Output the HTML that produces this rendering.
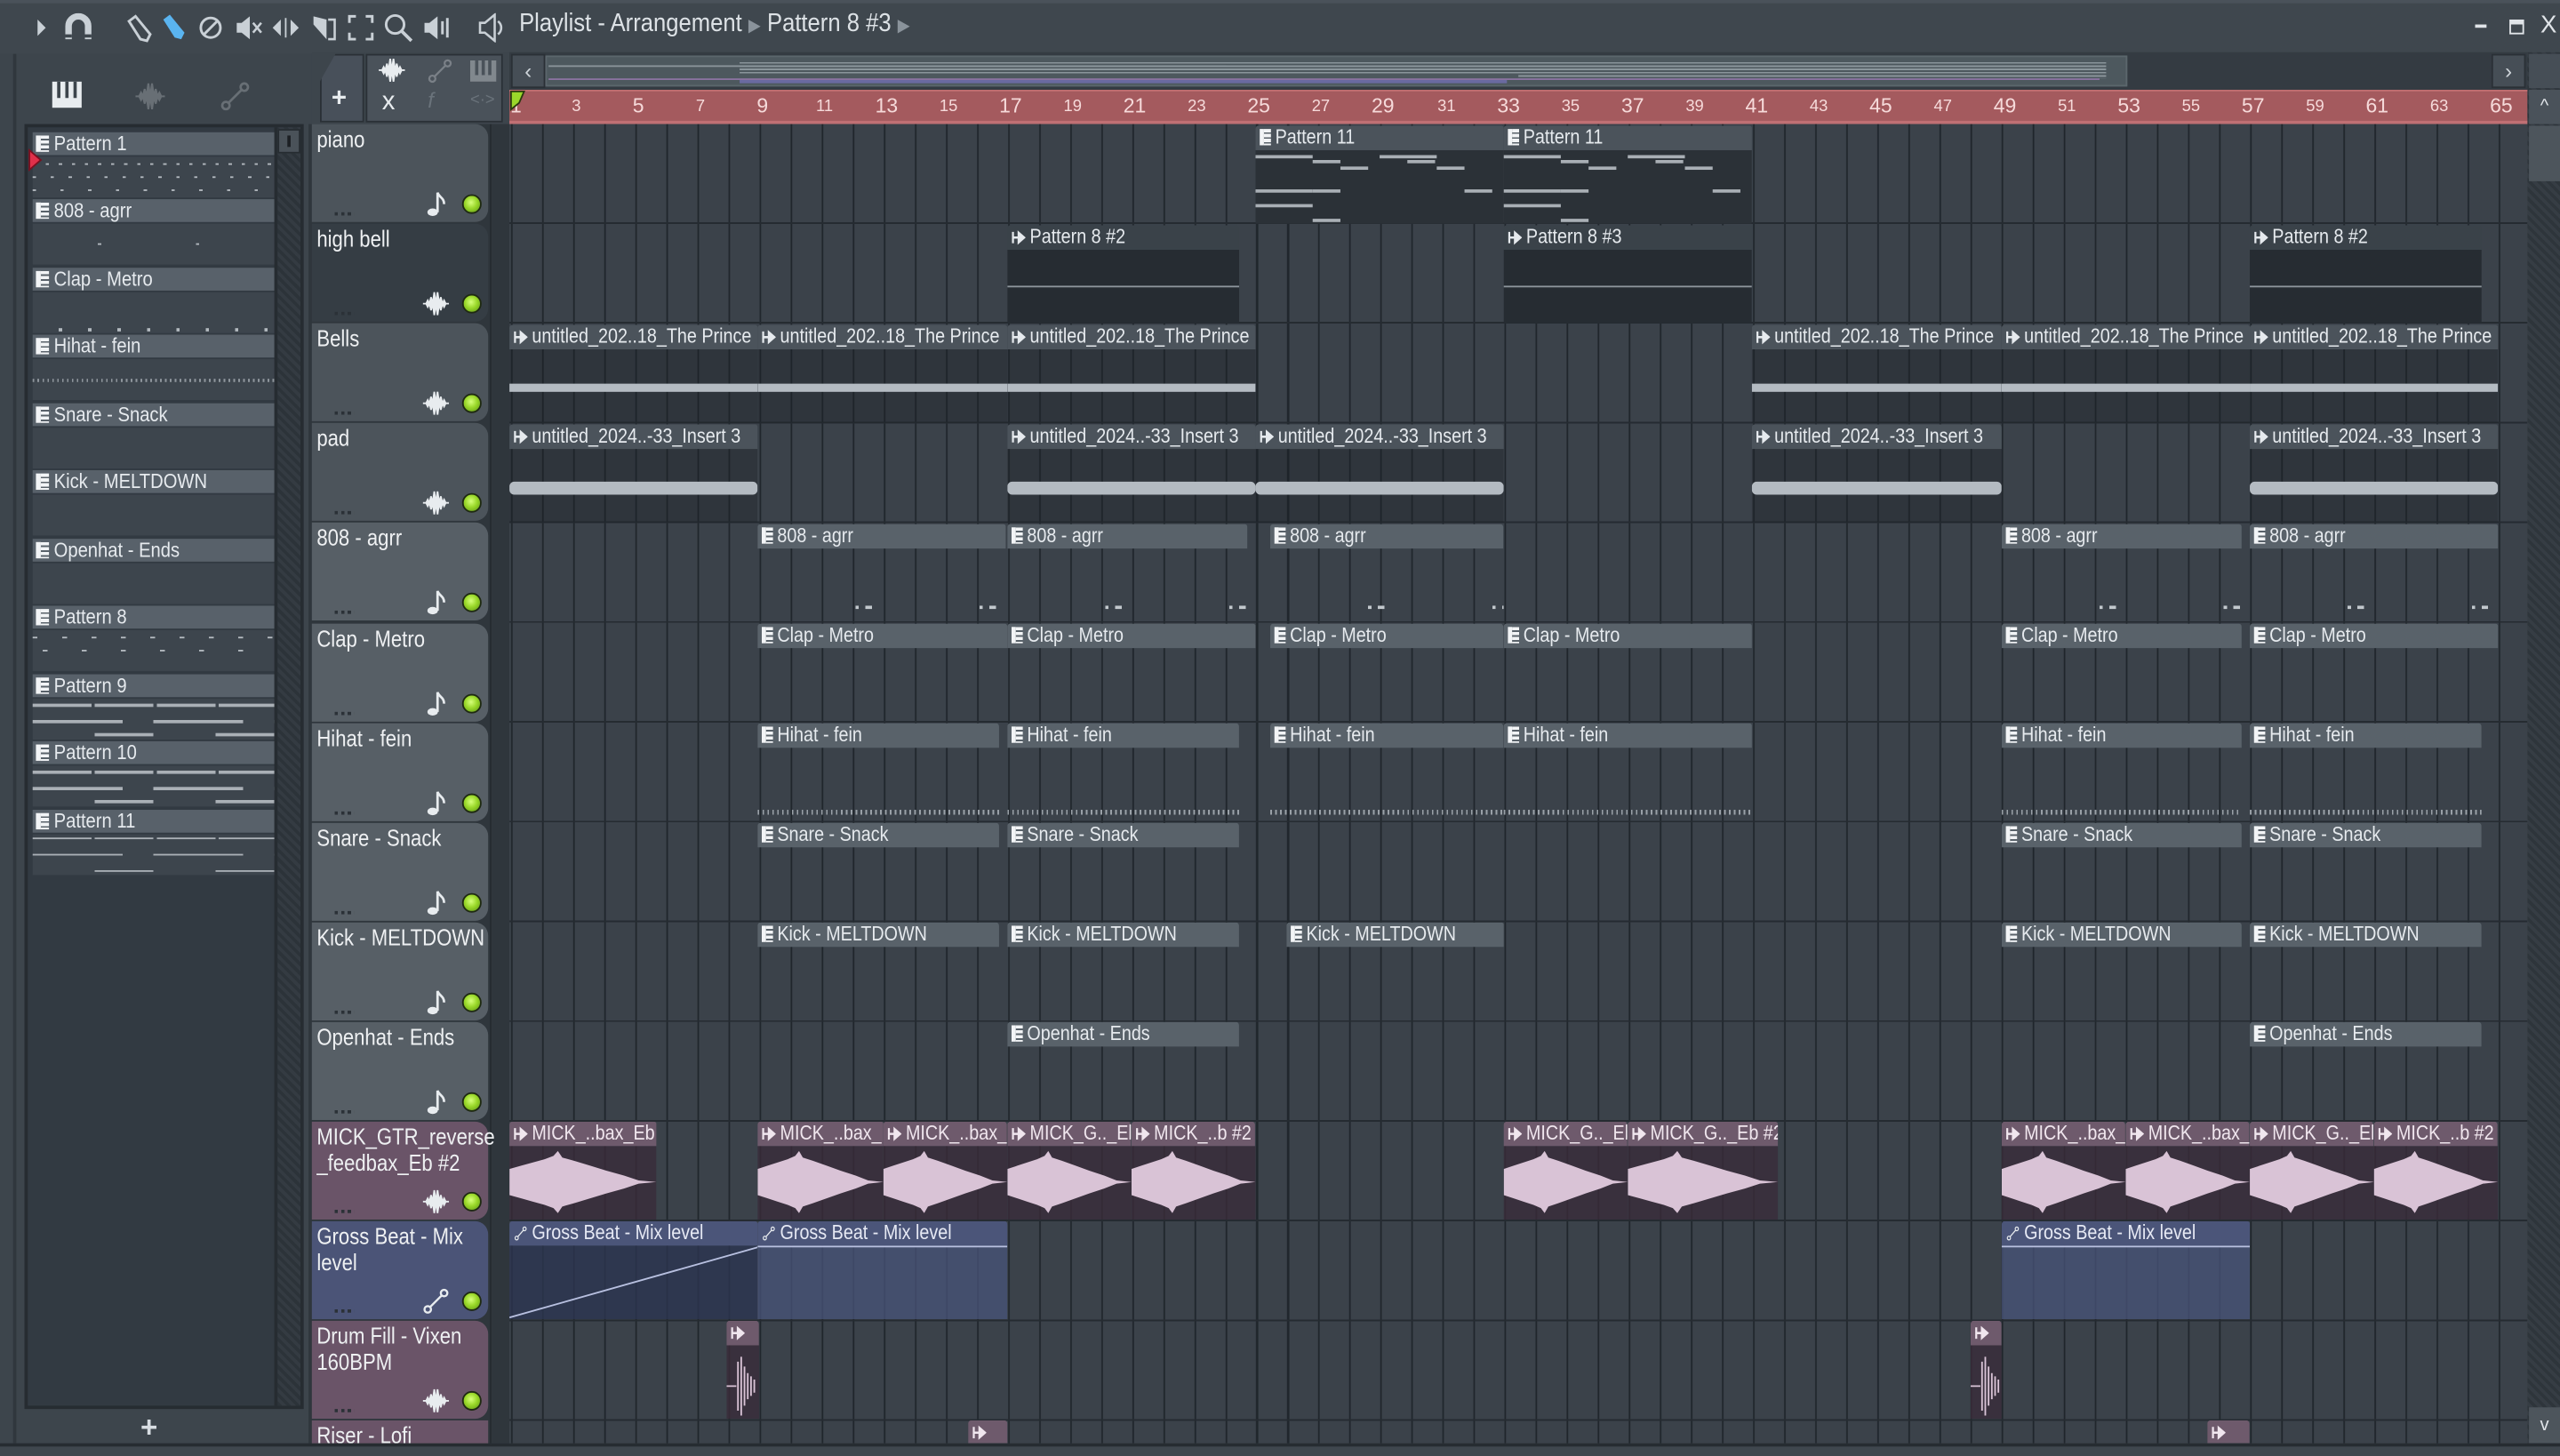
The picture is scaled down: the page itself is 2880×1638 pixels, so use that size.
<!DOCTYPE html>
<html><head><meta charset="utf-8">
<style>
*{margin:0;padding:0;box-sizing:border-box}
html,body{width:2880px;height:1638px;overflow:hidden;background:#3d454c}
#w{position:absolute;left:0;top:0;width:1568px;height:892px;transform:scale(1.836735);transform-origin:0 0;background:#3d454c;font-family:"Liberation Sans",sans-serif;color:#e4e8ec;overflow:hidden}
.a{position:absolute}
.tb{left:0;top:0;width:1568px;height:33px;background:#3f474e;border-top:2px solid #4a525a}
.title{left:318px;top:6px;font-size:15.5px;color:#dde2e6;transform:scaleX(.9);transform-origin:0 0;white-space:nowrap}
#grid{left:312px;top:76px;width:1236px;height:808px;background-color:#3b424a;
background-image:repeating-linear-gradient(180deg,transparent 0 60.1px,#252b31 60.1px 61.1px),repeating-linear-gradient(90deg,#20262c 0 1px,transparent 1px 19.02px);background-position:0 0,1px 0}
.ruler{left:312px;top:55px;width:1236px;height:21px;background:#a45a5e;border-top:1px solid #c06f72;border-bottom:2px solid #c07074}
.rn{position:absolute;top:4px;width:20px;margin-left:-10px;text-align:center;color:#f6dada;font-size:10px}
.rn.b{font-size:12.5px;top:2px}
.th{position:absolute;left:191px;width:108px;height:60px;background:#4c545b;border-radius:0 8px 8px 0;font-size:14px;padding:1px 3px;line-height:16px;color:#eef0f2}
.th .nm{display:inline-block;transform:scaleX(.86);transform-origin:0 0;white-space:nowrap}
.th .dots{position:absolute;left:14px;bottom:4px;width:12px;height:2px;background:repeating-linear-gradient(90deg,#2b3137 0 2px,transparent 2px 4px)}
.th .led{position:absolute;left:92px;top:43px;width:12px;height:12px;border-radius:50%;background:radial-gradient(circle at 45% 40%,#d6ff7a 0,#9ad82a 45%,#5c9412 100%);border:1.5px solid #1f2a12}
.th svg{position:absolute;left:68px;top:41px;width:16px;height:16px}
.c{position:absolute;height:60px;overflow:hidden}
.h{height:15px;width:116.3%;transform:scaleX(.86);transform-origin:0 0;font-size:12.5px;line-height:15px;padding-left:2px;white-space:nowrap;overflow:hidden;border-radius:2px 2px 0 0;color:#e6eaee}
.p .h{background:#59626a}
.au .h{background:#4b535b}
.au .bd{position:absolute;left:0;top:15px;right:0;bottom:0;background:rgba(28,34,40,.38)}
.pi{display:inline-block;width:8px;height:10px;margin:0 3px -1px 1px;background:repeating-linear-gradient(180deg,#f2f4f6 0 2px,#59626a 2px 3px);border-left:3px solid #f2f4f6}
.ai{display:inline-block;width:10px;height:9px;margin:0 3px -1px 1px}
.wv{position:absolute;left:0;right:0;background:#b4bbc2}
.mk .h{background:#6e5a6c;color:#f0e6ee}
.mk .bd{position:absolute;left:0;top:15px;right:0;bottom:0;background:rgba(58,44,58,.8)}
.mk svg.w{position:absolute;left:0;top:17px;width:100%;height:40px}
.gb .h{background:#4b5579;color:#e6e9f4}
.gb .bd{position:absolute;left:0;top:15px;right:0;bottom:0;background:rgba(72,84,122,.75)}
.dk .h{background:#3a4249}
.dk .bd{position:absolute;left:0;top:15px;right:0;bottom:0;background:#262c32}
.pn .h{background:#4b535b}
.pn .bd{position:absolute;left:0;top:15px;right:0;bottom:0;background:#2b3137;
background-image:linear-gradient(#a9afb5,#a9afb5),linear-gradient(#a9afb5,#a9afb5),linear-gradient(#a9afb5,#a9afb5),linear-gradient(#a9afb5,#a9afb5),linear-gradient(#a9afb5,#a9afb5),linear-gradient(#a9afb5,#a9afb5),linear-gradient(#a9afb5,#a9afb5),linear-gradient(#a9afb5,#a9afb5),linear-gradient(#a9afb5,#a9afb5),linear-gradient(#a9afb5,#a9afb5),linear-gradient(#a9afb5,#a9afb5),linear-gradient(#a9afb5,#a9afb5);
background-size:35px 2px,17px 2px,17px 2px,35px 2px,17px 2px,35px 2px,17px 2px,17px 2px,17px 2px,35px 2px,17px 2px,17px 2px;
background-repeat:no-repeat;
background-position:0 3px,35px 6px,52px 10px,0 24px,35px 24px,0 33px,35px 42px,52px 45px,111px 10px,76px 3px,93px 6px,128px 24px}
.n808{background-image:repeating-linear-gradient(90deg,#c2c8cd 0 2px,transparent 2px 16px),repeating-linear-gradient(90deg,transparent 0 60px,#c2c8cd 60px 62px,transparent 62px 66px,#c2c8cd 66px 70px,transparent 70px 76px);background-repeat:repeat-x;background-size:100% 2px,100% 2px;background-position:0 46px,0 35px}
.nclap{background-image:repeating-linear-gradient(90deg,transparent 0 17px,#c2c8cd 17px 19px);background-repeat:repeat-x;background-size:100% 3px;background-position:0 55px}
.nhh{background-image:repeating-linear-gradient(90deg,#9aa1a8 0 1px,transparent 1px 3px);background-repeat:repeat-x;background-size:100% 3px;background-position:0 38px}
.pl{position:absolute;left:0;right:0;top:15px;bottom:0}
.lp{left:15px;top:76px;width:171px;height:787px;background:#323a42;border:2px solid #262c31}
.li{position:absolute;left:3px;width:148px}
.li .lh{height:14px;background:#58616a;font-size:12.5px;line-height:14px;padding-left:1px;color:#e6eaee;white-space:nowrap;overflow:hidden}
.li .lh span{display:inline-block;transform:scaleX(.88);transform-origin:0 0}
.li .lb{height:25px;background:#3d454d;margin-top:1px}
</style></head><body>
<svg width="0" height="0" style="position:absolute">
<defs>
<symbol id="au" viewBox="0 0 10 9"><path d="M1 1v7M1 4.5h8M5 1.5l4 3-4 3z" stroke="currentColor" stroke-width="1.4" fill="currentColor"/></symbol>
<symbol id="wave" viewBox="0 0 16 16"><path d="M0 8h2l1-2 1 2 1-4 1 4 1-7 1 7 1-7 1 7 1-4 1 4 1-2 1 2h2M0 8h2l1 2 1-2 1 4 1-4 1 7 1-7 1 7 1-7 1 4 1-4 1 2 1-2" fill="#e8ecef" stroke="#e8ecef" stroke-width="1"/></symbol>
<symbol id="note" viewBox="0 0 16 16"><ellipse cx="6" cy="13" rx="3.2" ry="2.3" fill="#e8ecef"/><path d="M9 13V1c1 3 4 3 4 7" stroke="#e8ecef" stroke-width="1.5" fill="none"/></symbol>
<symbol id="auto" viewBox="0 0 16 16"><circle cx="3" cy="13" r="2" fill="none" stroke="#e8ecef" stroke-width="1.3"/><circle cx="13" cy="3" r="2" fill="none" stroke="#e8ecef" stroke-width="1.3"/><path d="M4.5 11.5l7-7" stroke="#e8ecef" stroke-width="1.3"/></symbol>
<symbol id="mw" viewBox="0 0 100 40" preserveAspectRatio="none"><path d="M0 12 L8 10 L16 8 L24 6 L30 4 L33 1 L36 5 L44 7 L55 10 L66 13 L78 16 L88 19 L100 20 L88 21 L78 24 L66 27 L55 30 L44 33 L36 35 L33 39 L30 36 L24 34 L16 32 L8 30 L0 28Z" fill="#d9c3d6"/></symbol>
</defs></svg>
<div id="w">
<div class="a tb"></div>
<div class="a" style="left:8px;top:33px;width:2px;height:859px;background:#30373d"></div>
<svg class="a" style="left:22px;top:11px" width="8" height="12"><path d="M1 1l5 5-5 5z" fill="#c9d0d6"/></svg>
<svg class="a" style="left:39px;top:8px" width="18" height="18"><path d="M3 16V8a6 6 0 0 1 12 0v8" stroke="#c9d0d6" stroke-width="4" fill="none"/><path d="M1 14h4M13 14h4" stroke="#3f474e" stroke-width="2"/></svg>
<svg class="a" style="left:76px;top:8px" width="18" height="18"><path d="M3 5l4-3 9 11-2 4-4-1z" stroke="#c9d0d6" stroke-width="1.6" fill="none"/></svg>
<svg class="a" style="left:98px;top:8px" width="18" height="18"><path d="M2 4l4-3 9 11-2 4-4-1z" fill="#5ab4f0"/></svg>
<svg class="a" style="left:121px;top:9px" width="16" height="16"><circle cx="8" cy="8" r="6" stroke="#c9d0d6" stroke-width="1.6" fill="none"/><path d="M4 12l8-8" stroke="#c9d0d6" stroke-width="1.6"/></svg>
<svg class="a" style="left:144px;top:9px" width="18" height="16"><path d="M1 5h3l5-4v14l-5-4H1z" fill="#c9d0d6"/><path d="M11 5l5 6M16 5l-5 6" stroke="#c9d0d6" stroke-width="1.4"/></svg>
<svg class="a" style="left:166px;top:9px" width="18" height="16"><path d="M1 8l5-5v10zM17 8l-5-5v10z" fill="#c9d0d6"/><path d="M9 2v12" stroke="#c9d0d6"/></svg>
<svg class="a" style="left:190px;top:8px" width="18" height="18"><path d="M2 2l8 2v12l-8-9z" fill="#c9d0d6"/><path d="M11 4h4v12h-4" stroke="#c9d0d6" stroke-width="1.4" fill="none"/></svg>
<svg class="a" style="left:213px;top:9px" width="16" height="16"><path d="M1 5V1h4M11 1h4v4M15 11v4h-4M5 15H1v-4" stroke="#c9d0d6" stroke-width="1.6" fill="none"/></svg>
<svg class="a" style="left:235px;top:8px" width="18" height="18"><circle cx="7" cy="7" r="5.5" stroke="#c9d0d6" stroke-width="1.6" fill="none"/><path d="M11 11l6 6" stroke="#c9d0d6" stroke-width="2"/></svg>
<svg class="a" style="left:259px;top:9px" width="18" height="16"><path d="M1 5h3l5-4v14l-5-4H1z" fill="#c9d0d6"/><path d="M12 4v8M15 2v12" stroke="#c9d0d6" stroke-width="1.6"/></svg>
<svg class="a" style="left:293px;top:8px" width="18" height="18"><path d="M1 6h3l6-5v16l-6-5H1z" stroke="#c9d0d6" stroke-width="1.4" fill="none"/><path d="M12 5a5 5 0 0 1 0 8" stroke="#c9d0d6" stroke-width="1.4" fill="none"/></svg>
<div class="a title">Playlist - Arrangement <span style="color:#8a939b;font-size:11px">▶</span> Pattern 8 #3 <span style="color:#8a939b;font-size:11px">▶</span></div>
<div class="a" style="left:1516px;top:15px;width:7px;height:2px;background:#e0e4e8"></div>
<div class="a" style="left:1537px;top:12px;width:9px;height:9px;border:1.5px solid #e0e4e8;border-top-width:3px"></div>
<div class="a" style="left:1556px;top:7px;font-size:15px;color:#e0e4e8">X</div>

<svg class="a" style="left:31px;top:49px" width="20" height="18"><rect x="1" y="1" width="18" height="16" fill="#e8ecef"/><path d="M5 1v10M10 1v10M15 1v10" stroke="#3d454c" stroke-width="2"/></svg>
<svg class="a" style="left:82px;top:50px;opacity:.25" width="20" height="18"><use href="#wave"/></svg>
<svg class="a" style="left:135px;top:50px;opacity:.25" width="18" height="18"><use href="#auto"/></svg>

<div class="a lp">
 <div class="a" style="left:151px;top:0;width:16px;height:783px;background:repeating-linear-gradient(45deg,#2c3339 0 2px,#343b42 2px 4px);border-left:2px solid #262c31"></div>
 <div class="a" style="left:153px;top:1px;width:14px;height:15px;background:#4a5259;border:1px solid #262c31"><div style="margin:3px auto;width:2px;height:7px;background:#1c2024"></div></div>
 <div class="li" style="top:3px"><div class="lh"><i class="pi"></i><span>Pattern 1</span></div><div class="lb" style="background-image:repeating-linear-gradient(90deg,#b4bac0 0 2px,transparent 2px 8px),repeating-linear-gradient(90deg,#b4bac0 0 2px,transparent 2px 11px),repeating-linear-gradient(90deg,#b4bac0 0 2px,transparent 2px 17px);background-repeat:repeat-x;background-size:100% 1px;background-position:0 4px,0 12px,0 20px"></div></div>
 <div class="li" style="top:44px"><div class="lh"><i class="pi"></i><span>808 - agrr</span></div><div class="lb" style="background-image:repeating-linear-gradient(90deg,transparent 0 40px,#b4bac0 40px 42px,transparent 42px 60px);background-repeat:repeat-x;background-size:100% 1px;background-position:0 12px"></div></div>
 <div class="li" style="top:86px"><div class="lh"><i class="pi"></i><span>Clap - Metro</span></div><div class="lb" style="background-image:repeating-linear-gradient(90deg,transparent 0 16px,#b4bac0 16px 18px);background-repeat:repeat-x;background-size:100% 2px;background-position:0 22px"></div></div>
 <div class="li" style="top:127px"><div class="lh"><i class="pi"></i><span>Hihat - fein</span></div><div class="lb" style="background-image:repeating-linear-gradient(90deg,#8e959c 0 1px,transparent 1px 3px);background-repeat:repeat-x;background-size:100% 2px;background-position:0 12px"></div></div>
 <div class="li" style="top:169px"><div class="lh"><i class="pi"></i><span>Snare - Snack</span></div><div class="lb"></div></div>
 <div class="li" style="top:210px"><div class="lh"><i class="pi"></i><span>Kick - MELTDOWN</span></div><div class="lb"></div></div>
 <div class="li" style="top:252px"><div class="lh"><i class="pi"></i><span>Openhat - Ends</span></div><div class="lb"></div></div>
 <div class="li" style="top:293px"><div class="lh"><i class="pi"></i><span>Pattern 8</span></div><div class="lb" style="background-image:repeating-linear-gradient(90deg,#b4bac0 0 3px,transparent 3px 18px),repeating-linear-gradient(90deg,transparent 0 6px,#b4bac0 6px 9px,transparent 9px 24px);background-repeat:repeat-x;background-size:100% 1px;background-position:0 4px,0 12px"></div></div>
 <div class="li" style="top:335px"><div class="lh"><i class="pi"></i><span>Pattern 9</span></div><div class="lb" style="background-image:repeating-linear-gradient(90deg,#aab0b6 0 36px,transparent 36px 38px),repeating-linear-gradient(90deg,#aab0b6 0 55px,transparent 55px 74px),repeating-linear-gradient(90deg,transparent 0 38px,#aab0b6 38px 74px);background-repeat:repeat-x;background-size:100% 2px;background-position:0 3px,0 13px,0 21px"></div></div>
 <div class="li" style="top:376px"><div class="lh"><i class="pi"></i><span>Pattern 10</span></div><div class="lb" style="background-image:repeating-linear-gradient(90deg,#aab0b6 0 36px,transparent 36px 38px),repeating-linear-gradient(90deg,#aab0b6 0 55px,transparent 55px 74px),repeating-linear-gradient(90deg,transparent 0 38px,#aab0b6 38px 74px);background-repeat:repeat-x;background-size:100% 2px;background-position:0 3px,0 13px,0 21px"></div></div>
 <div class="li" style="top:418px"><div class="lh"><i class="pi"></i><span>Pattern 11</span></div><div class="lb" style="background-image:repeating-linear-gradient(90deg,#aab0b6 0 36px,transparent 36px 38px),repeating-linear-gradient(90deg,#aab0b6 0 55px,transparent 55px 74px),repeating-linear-gradient(90deg,transparent 0 38px,#aab0b6 38px 74px);background-repeat:repeat-x;background-size:100% 1px;background-position:0 2px,0 12px,0 22px"></div></div>
</div>
<svg class="a" style="left:17px;top:91px" width="9" height="14"><path d="M1 1l7 6-7 6z" fill="#e0304a" stroke="#7a1020"/></svg>
<div class="a" style="left:86px;top:864px;font-size:18px;color:#d8dde2;font-weight:bold">+</div>

<div class="a" style="left:191px;top:32px;width:121px;height:44px;background:#3d454c"></div>
<div class="a" style="left:196px;top:33px;width:27px;height:42px;background:#48505a;border:1px solid #2a3036;border-radius:6px 0 0 0;clip-path:polygon(35% 0,100% 0,100% 100%,0 100%,0 40%)"></div>
<div class="a" style="left:203px;top:52px;font-size:16px;font-weight:bold;color:#e8ecef">+</div>
<div class="a" style="left:224px;top:33px;width:84px;height:42px;background:#4a525a;border:1px solid #2a3036"></div>
<svg class="a" style="left:230px;top:35px" width="20" height="16"><use href="#wave"/></svg>
<svg class="a" style="left:262px;top:36px;opacity:.3" width="15" height="15"><use href="#auto"/></svg>
<svg class="a" style="left:288px;top:37px;opacity:.35" width="16" height="13"><rect width="16" height="13" fill="#e8ecef"/><path d="M4 0v9M8 0v9M12 0v9" stroke="#4a525a" stroke-width="2"/></svg>
<div class="a" style="left:234px;top:54px;font-size:16px;color:#e8ecef">x</div>
<div class="a" style="left:262px;top:54px;font-size:13px;color:#6a737b;font-style:italic">f</div>
<div class="a" style="left:288px;top:56px;font-size:10px;color:#6a737b">&lt;·&gt;</div>

<div class="a" style="left:312px;top:32px;width:1236px;height:23px;background:#343b42"></div>
<div class="a" style="left:313px;top:33px;width:21px;height:21px;background:#464e56;border:1px solid #2a3036;color:#cfd5da;font-size:13px;text-align:center;line-height:19px">‹</div>
<div class="a" style="left:334px;top:34px;width:969px;height:19px;background:#4d585e;border:1px solid #5b666c"></div>
<div class="a" style="left:336px;top:40px;width:415px;height:1px;background:#8a959b"></div>
<div class="a" style="left:453px;top:38px;width:478px;height:8px;background:repeating-linear-gradient(180deg,#8a959b 0 1px,transparent 1px 2px)"></div>
<div class="a" style="left:930px;top:38px;width:360px;height:10px;background:repeating-linear-gradient(180deg,#8a959b 0 1px,transparent 1px 2px)"></div>
<div class="a" style="left:336px;top:48px;width:950px;height:1px;background:#8a72a0"></div>
<div class="a" style="left:453px;top:49px;width:470px;height:2px;background:#6a6aa0"></div>
<div class="a" style="left:1526px;top:33px;width:21px;height:21px;background:#464e56;border:1px solid #2a3036;color:#cfd5da;font-size:13px;text-align:center;line-height:19px">›</div>
<div class="a" style="left:1548px;top:32px;width:20px;height:860px;background:repeating-linear-gradient(45deg,#2e353b 0 2px,#363d44 2px 4px)"></div>
<div class="a" style="left:1549px;top:33px;width:19px;height:21px;background:#464e56"></div>
<div class="a" style="left:1549px;top:55px;width:19px;height:21px;background:#4a525a;color:#e0e4e8;font-size:11px;text-align:center;line-height:21px">^</div>
<div class="a" style="left:1549px;top:77px;width:19px;height:34px;background:#4d555c"></div>
<div class="a" style="left:1549px;top:862px;width:19px;height:22px;background:#4d555c;color:#e0e4e8;font-size:11px;text-align:center;line-height:22px">v</div>
<div class="a" style="left:0;top:884px;width:1568px;height:8px;background:#3f474e;border-top:2px solid #262c31"></div>

<div class="a ruler">
<span class="rn b" style="left:4px">1</span><span class="rn" style="left:41px">3</span><span class="rn b" style="left:79px">5</span><span class="rn" style="left:117px">7</span><span class="rn b" style="left:155px">9</span><span class="rn" style="left:193px">11</span><span class="rn b" style="left:231px">13</span><span class="rn" style="left:269px">15</span><span class="rn b" style="left:307px">17</span><span class="rn" style="left:345px">19</span><span class="rn b" style="left:383px">21</span><span class="rn" style="left:421px">23</span><span class="rn b" style="left:459px">25</span><span class="rn" style="left:497px">27</span><span class="rn b" style="left:535px">29</span><span class="rn" style="left:574px">31</span><span class="rn b" style="left:612px">33</span><span class="rn" style="left:650px">35</span><span class="rn b" style="left:688px">37</span><span class="rn" style="left:726px">39</span><span class="rn b" style="left:764px">41</span><span class="rn" style="left:802px">43</span><span class="rn b" style="left:840px">45</span><span class="rn" style="left:878px">47</span><span class="rn b" style="left:916px">49</span><span class="rn" style="left:954px">51</span><span class="rn b" style="left:992px">53</span><span class="rn" style="left:1030px">55</span><span class="rn b" style="left:1068px">57</span><span class="rn" style="left:1106px">59</span><span class="rn b" style="left:1144px">61</span><span class="rn" style="left:1182px">63</span><span class="rn b" style="left:1220px">65</span>
</div>
<svg class="a" style="left:312px;top:55px" width="10" height="14"><path d="M1 1h8l-3 7-5 4z" fill="#9ad82a" stroke="#2a3a10"/></svg>

<div class="a" style="left:189px;top:76px;width:123px;height:808px;background:#2f363c"></div>
<div class="a" style="left:300px;top:76px;width:1px;height:808px;background:#262c31"></div>

<div class="th" style="top:76px"><span class="nm">piano</span><svg><use href="#note"/></svg><i class="led"></i><i class="dots"></i></div>
<div class="th" style="top:137px;background:#353d44"><span class="nm">high bell</span><svg><use href="#wave"/></svg><i class="led"></i><i class="dots"></i></div>
<div class="th" style="top:198px"><span class="nm">Bells</span><svg><use href="#wave"/></svg><i class="led"></i><i class="dots"></i></div>
<div class="th" style="top:259px"><span class="nm">pad</span><svg><use href="#wave"/></svg><i class="led"></i><i class="dots"></i></div>
<div class="th" style="top:320px;background:#575f66"><span class="nm">808 - agrr</span><svg><use href="#note"/></svg><i class="led"></i><i class="dots"></i></div>
<div class="th" style="top:382px;background:#575f66"><span class="nm">Clap - Metro</span><svg><use href="#note"/></svg><i class="led"></i><i class="dots"></i></div>
<div class="th" style="top:443px;background:#575f66"><span class="nm">Hihat - fein</span><svg><use href="#note"/></svg><i class="led"></i><i class="dots"></i></div>
<div class="th" style="top:504px;background:#575f66"><span class="nm">Snare - Snack</span><svg><use href="#note"/></svg><i class="led"></i><i class="dots"></i></div>
<div class="th" style="top:565px;background:#575f66"><span class="nm">Kick - MELTDOWN</span><svg><use href="#note"/></svg><i class="led"></i><i class="dots"></i></div>
<div class="th" style="top:626px;background:#575f66"><span class="nm">Openhat - Ends</span><svg><use href="#note"/></svg><i class="led"></i><i class="dots"></i></div>
<div class="th" style="top:687px;background:#6a5468"><span class="nm">MICK_GTR_reverse<br>_feedbax_Eb #2</span><svg><use href="#wave"/></svg><i class="led"></i><i class="dots"></i></div>
<div class="th" style="top:748px;background:#4b5477"><span class="nm">Gross Beat - Mix<br>level</span><svg><use href="#auto"/></svg><i class="led"></i><i class="dots"></i></div>
<div class="th" style="top:809px;background:#6a5468"><span class="nm">Drum Fill - Vixen<br>160BPM</span><svg><use href="#wave"/></svg><i class="led"></i><i class="dots"></i></div>
<div class="th" style="top:870px;background:#6a5468;height:14px;border-radius:0;overflow:hidden"><span class="nm">Riser - Lofi</span></div>

<div class="a" id="grid"></div>

<div class="c pn" style="left:769px;top:77px;width:152px"><div class="h"><i class="pi"></i>Pattern 11</div><div class="bd"></div></div>
<div class="c pn" style="left:921px;top:77px;width:152px"><div class="h"><i class="pi"></i>Pattern 11</div><div class="bd"></div></div>
<div class="c dk" style="left:617px;top:138px;width:142px"><div class="h"><svg class="ai"><use href="#au"/></svg>Pattern 8 #2</div><div class="bd"><div class="wv" style="top:22px;height:1px;background:#8d959c"></div></div></div>
<div class="c dk" style="left:921px;top:138px;width:152px"><div class="h"><svg class="ai"><use href="#au"/></svg>Pattern 8 #3</div><div class="bd"><div class="wv" style="top:22px;height:1px;background:#8d959c"></div></div></div>
<div class="c dk" style="left:1378px;top:138px;width:142px"><div class="h"><svg class="ai"><use href="#au"/></svg>Pattern 8 #2</div><div class="bd"><div class="wv" style="top:22px;height:1px;background:#8d959c"></div></div></div>
<div class="c au" style="left:312px;top:199px;width:152px"><div class="h"><svg class="ai"><use href="#au"/></svg>untitled_202..18_The Prince</div><div class="bd"><div class="wv" style="top:21px;height:5px"></div></div></div>
<div class="c au" style="left:464px;top:199px;width:153px"><div class="h"><svg class="ai"><use href="#au"/></svg>untitled_202..18_The Prince</div><div class="bd"><div class="wv" style="top:21px;height:5px"></div></div></div>
<div class="c au" style="left:617px;top:199px;width:152px"><div class="h"><svg class="ai"><use href="#au"/></svg>untitled_202..18_The Prince</div><div class="bd"><div class="wv" style="top:21px;height:5px"></div></div></div>
<div class="c au" style="left:1073px;top:199px;width:153px"><div class="h"><svg class="ai"><use href="#au"/></svg>untitled_202..18_The Prince</div><div class="bd"><div class="wv" style="top:21px;height:5px"></div></div></div>
<div class="c au" style="left:1226px;top:199px;width:152px"><div class="h"><svg class="ai"><use href="#au"/></svg>untitled_202..18_The Prince</div><div class="bd"><div class="wv" style="top:21px;height:5px"></div></div></div>
<div class="c au" style="left:1378px;top:199px;width:152px"><div class="h"><svg class="ai"><use href="#au"/></svg>untitled_202..18_The Prince</div><div class="bd"><div class="wv" style="top:21px;height:5px"></div></div></div>
<div class="c au" style="left:312px;top:260px;width:152px"><div class="h"><svg class="ai"><use href="#au"/></svg>untitled_2024..-33_Insert 3</div><div class="bd"><div class="wv" style="top:20px;height:8px;border-radius:3px"></div></div></div>
<div class="c au" style="left:617px;top:260px;width:152px"><div class="h"><svg class="ai"><use href="#au"/></svg>untitled_2024..-33_Insert 3</div><div class="bd"><div class="wv" style="top:20px;height:8px;border-radius:3px"></div></div></div>
<div class="c au" style="left:769px;top:260px;width:152px"><div class="h"><svg class="ai"><use href="#au"/></svg>untitled_2024..-33_Insert 3</div><div class="bd"><div class="wv" style="top:20px;height:8px;border-radius:3px"></div></div></div>
<div class="c au" style="left:1073px;top:260px;width:153px"><div class="h"><svg class="ai"><use href="#au"/></svg>untitled_2024..-33_Insert 3</div><div class="bd"><div class="wv" style="top:20px;height:8px;border-radius:3px"></div></div></div>
<div class="c au" style="left:1378px;top:260px;width:152px"><div class="h"><svg class="ai"><use href="#au"/></svg>untitled_2024..-33_Insert 3</div><div class="bd"><div class="wv" style="top:20px;height:8px;border-radius:3px"></div></div></div>
<div class="c p" style="left:464px;top:321px;width:152px"><div class="h"><i class="pi"></i>808 - agrr</div><div class="pl n808"></div></div>
<div class="c p" style="left:617px;top:321px;width:147px"><div class="h"><i class="pi"></i>808 - agrr</div><div class="pl n808"></div></div>
<div class="c p" style="left:778px;top:321px;width:143px"><div class="h"><i class="pi"></i>808 - agrr</div><div class="pl n808"></div></div>
<div class="c p" style="left:1226px;top:321px;width:147px"><div class="h"><i class="pi"></i>808 - agrr</div><div class="pl n808"></div></div>
<div class="c p" style="left:1378px;top:321px;width:152px"><div class="h"><i class="pi"></i>808 - agrr</div><div class="pl n808"></div></div>
<div class="c p" style="left:464px;top:382px;width:153px"><div class="h"><i class="pi"></i>Clap - Metro</div><div class="pl nclap"></div></div>
<div class="c p" style="left:617px;top:382px;width:152px"><div class="h"><i class="pi"></i>Clap - Metro</div><div class="pl nclap"></div></div>
<div class="c p" style="left:778px;top:382px;width:143px"><div class="h"><i class="pi"></i>Clap - Metro</div><div class="pl nclap"></div></div>
<div class="c p" style="left:921px;top:382px;width:152px"><div class="h"><i class="pi"></i>Clap - Metro</div><div class="pl nclap"></div></div>
<div class="c p" style="left:1226px;top:382px;width:147px"><div class="h"><i class="pi"></i>Clap - Metro</div><div class="pl nclap"></div></div>
<div class="c p" style="left:1378px;top:382px;width:152px"><div class="h"><i class="pi"></i>Clap - Metro</div><div class="pl nclap"></div></div>
<div class="c p" style="left:464px;top:443px;width:148px"><div class="h"><i class="pi"></i>Hihat - fein</div><div class="pl nhh"></div></div>
<div class="c p" style="left:617px;top:443px;width:142px"><div class="h"><i class="pi"></i>Hihat - fein</div><div class="pl nhh"></div></div>
<div class="c p" style="left:778px;top:443px;width:143px"><div class="h"><i class="pi"></i>Hihat - fein</div><div class="pl nhh"></div></div>
<div class="c p" style="left:921px;top:443px;width:152px"><div class="h"><i class="pi"></i>Hihat - fein</div><div class="pl nhh"></div></div>
<div class="c p" style="left:1226px;top:443px;width:147px"><div class="h"><i class="pi"></i>Hihat - fein</div><div class="pl nhh"></div></div>
<div class="c p" style="left:1378px;top:443px;width:142px"><div class="h"><i class="pi"></i>Hihat - fein</div><div class="pl nhh"></div></div>
<div class="c p" style="left:464px;top:504px;width:148px"><div class="h"><i class="pi"></i>Snare - Snack</div></div>
<div class="c p" style="left:617px;top:504px;width:142px"><div class="h"><i class="pi"></i>Snare - Snack</div></div>
<div class="c p" style="left:1226px;top:504px;width:147px"><div class="h"><i class="pi"></i>Snare - Snack</div></div>
<div class="c p" style="left:1378px;top:504px;width:142px"><div class="h"><i class="pi"></i>Snare - Snack</div></div>
<div class="c p" style="left:464px;top:565px;width:148px"><div class="h"><i class="pi"></i>Kick - MELTDOWN</div></div>
<div class="c p" style="left:617px;top:565px;width:142px"><div class="h"><i class="pi"></i>Kick - MELTDOWN</div></div>
<div class="c p" style="left:788px;top:565px;width:133px"><div class="h"><i class="pi"></i>Kick - MELTDOWN</div></div>
<div class="c p" style="left:1226px;top:565px;width:147px"><div class="h"><i class="pi"></i>Kick - MELTDOWN</div></div>
<div class="c p" style="left:1378px;top:565px;width:142px"><div class="h"><i class="pi"></i>Kick - MELTDOWN</div></div>
<div class="c p" style="left:617px;top:626px;width:142px"><div class="h"><i class="pi"></i>Openhat - Ends</div></div>
<div class="c p" style="left:1378px;top:626px;width:142px"><div class="h"><i class="pi"></i>Openhat - Ends</div></div>
<div class="c mk" style="left:312px;top:687px;width:90px"><div class="h"><svg class="ai"><use href="#au"/></svg>MICK_..bax_Eb</div><div class="bd"></div><svg class="w" viewBox="0 0 100 40" preserveAspectRatio="none"><use href="#mw"/></svg></div>
<div class="c mk" style="left:464px;top:687px;width:77px"><div class="h"><svg class="ai"><use href="#au"/></svg>MICK_..bax_</div><div class="bd"></div><svg class="w" viewBox="0 0 100 40" preserveAspectRatio="none"><use href="#mw"/></svg></div>
<div class="c mk" style="left:541px;top:687px;width:76px"><div class="h"><svg class="ai"><use href="#au"/></svg>MICK_..bax_</div><div class="bd"></div><svg class="w" viewBox="0 0 100 40" preserveAspectRatio="none"><use href="#mw"/></svg></div>
<div class="c mk" style="left:617px;top:687px;width:76px"><div class="h"><svg class="ai"><use href="#au"/></svg>MICK_G.._Eb</div><div class="bd"></div><svg class="w" viewBox="0 0 100 40" preserveAspectRatio="none"><use href="#mw"/></svg></div>
<div class="c mk" style="left:693px;top:687px;width:76px"><div class="h"><svg class="ai"><use href="#au"/></svg>MICK_..b #2</div><div class="bd"></div><svg class="w" viewBox="0 0 100 40" preserveAspectRatio="none"><use href="#mw"/></svg></div>
<div class="c mk" style="left:921px;top:687px;width:76px"><div class="h"><svg class="ai"><use href="#au"/></svg>MICK_G.._Eb</div><div class="bd"></div><svg class="w" viewBox="0 0 100 40" preserveAspectRatio="none"><use href="#mw"/></svg></div>
<div class="c mk" style="left:997px;top:687px;width:92px"><div class="h"><svg class="ai"><use href="#au"/></svg>MICK_G.._Eb #2</div><div class="bd"></div><svg class="w" viewBox="0 0 100 40" preserveAspectRatio="none"><use href="#mw"/></svg></div>
<div class="c mk" style="left:1226px;top:687px;width:76px"><div class="h"><svg class="ai"><use href="#au"/></svg>MICK_..bax_</div><div class="bd"></div><svg class="w" viewBox="0 0 100 40" preserveAspectRatio="none"><use href="#mw"/></svg></div>
<div class="c mk" style="left:1302px;top:687px;width:76px"><div class="h"><svg class="ai"><use href="#au"/></svg>MICK_..bax_</div><div class="bd"></div><svg class="w" viewBox="0 0 100 40" preserveAspectRatio="none"><use href="#mw"/></svg></div>
<div class="c mk" style="left:1378px;top:687px;width:76px"><div class="h"><svg class="ai"><use href="#au"/></svg>MICK_G.._Eb</div><div class="bd"></div><svg class="w" viewBox="0 0 100 40" preserveAspectRatio="none"><use href="#mw"/></svg></div>
<div class="c mk" style="left:1454px;top:687px;width:76px"><div class="h"><svg class="ai"><use href="#au"/></svg>MICK_..b #2</div><div class="bd"></div><svg class="w" viewBox="0 0 100 40" preserveAspectRatio="none"><use href="#mw"/></svg></div>
<div class="c gb" style="left:312px;top:748px;width:152px"><div class="h"><svg class="ai" viewBox="0 0 16 16"><use href="#auto"/></svg>Gross Beat - Mix level</div><div class="bd" style="background:rgba(44,52,80,.8)"></div><svg class="a" style="left:0;top:15px" width="152" height="45"><path d="M0 44L152 1" stroke="#b8c0e0" stroke-width="1"/></svg></div>
<div class="c gb" style="left:464px;top:748px;width:153px"><div class="h"><svg class="ai" viewBox="0 0 16 16"><use href="#auto"/></svg>Gross Beat - Mix level</div><div class="bd" style="border-top:1px solid #b8c0e0"></div></div>
<div class="c gb" style="left:1226px;top:748px;width:152px"><div class="h"><svg class="ai" viewBox="0 0 16 16"><use href="#auto"/></svg>Gross Beat - Mix level</div><div class="bd" style="border-top:1px solid #b8c0e0"></div></div>
<div class="c mk" style="left:445px;top:809px;width:20px"><div class="h"><svg class="ai"><use href="#au"/></svg></div><div class="bd"></div><svg class="a" style="left:0;top:20px" width="20" height="38"><path d="M0 20h6M7 5v30M9 2v36M11 8v24M13 12v16M15 14v12M17 16v8" stroke="#d9c3d6" stroke-width="1"/></svg></div>
<div class="c mk" style="left:1207px;top:809px;width:19px"><div class="h"><svg class="ai"><use href="#au"/></svg></div><div class="bd"></div><svg class="a" style="left:0;top:20px" width="19" height="38"><path d="M0 20h6M7 5v30M9 2v36M11 8v24M13 12v16M15 14v12M17 16v8" stroke="#d9c3d6" stroke-width="1"/></svg></div>
<div class="c mk" style="left:593px;top:870px;width:24px;height:14px"><div class="h" style="height:14px"><svg class="ai"><use href="#au"/></svg></div></div>
<div class="c mk" style="left:1352px;top:870px;width:26px;height:14px"><div class="h" style="height:14px"><svg class="ai"><use href="#au"/></svg></div></div>
</div>
</body></html>
